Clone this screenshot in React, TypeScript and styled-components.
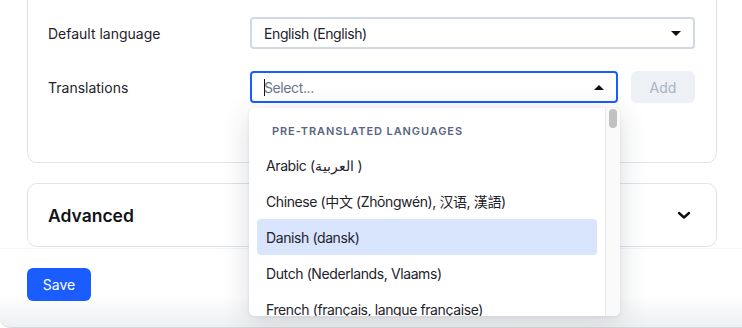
import React from "react";
import styled, { createGlobalStyle } from "styled-components";

const GlobalStyle = createGlobalStyle`
  html, body {
    margin: 0;
    padding: 0;
    background: #ffffff;
    font-family: Inter, "Noto Sans", "Noto Sans CJK SC", sans-serif;
    color: #1e222b;
  }
  * { box-sizing: border-box; }
`;

const languages = [
  "Arabic (العربية )",
  "Chinese (中文 (Zhōngwén), 汉语, 漢語)",
  "Danish (dansk)",
  "Dutch (Nederlands, Vlaams)",
  "French (français, langue française)",
  "German (Deutsch)",
];

export default function App() {
  return (
    <>
      <GlobalStyle />
      <StPanel>
        <StMain>
          <StCard>
            <StRow>
              <StLabel>Default language</StLabel>
              <StSelect>
                <StValue>English (English)</StValue>
                <StCaret dir="down" />
              </StSelect>
            </StRow>
            <StRow>
              <StLabel>Translations</StLabel>
              <StControls>
                <StField>
                  <StSelect focused>
                    <StValue placeholder>
                      <StTextCaret />
                      Select...
                    </StValue>
                    <StCaret dir="up" />
                  </StSelect>
                  <StMenu>
                    <StMenuList>
                      <StGroupTitle>Pre-translated languages</StGroupTitle>
                      {languages.map((lang) => (
                        <StOption key={lang} active={lang === "Danish (dansk)"}>
                          {lang}
                        </StOption>
                      ))}
                    </StMenuList>
                    <StScrollTrack>
                      <StScrollThumb />
                    </StScrollTrack>
                  </StMenu>
                </StField>
                <StAddButton disabled>Add</StAddButton>
              </StControls>
            </StRow>
          </StCard>
          <StSection>
            <StSectionTitle>Advanced</StSectionTitle>
            <svg width="16" height="16" viewBox="0 0 16 16">
              <path
                d="M3 6l5 4.5L13 6"
                fill="none"
                stroke="#111"
                strokeWidth="2.4"
                strokeLinecap="round"
                strokeLinejoin="round"
              />
            </svg>
          </StSection>
        </StMain>
        <StFooter>
          <StSaveButton>Save</StSaveButton>
        </StFooter>
      </StPanel>
    </>
  );
}

const StPanel = styled.div`
  width: 742px;
  height: 328px;
  overflow: hidden;
  display: flex;
  flex-direction: column;
`;

const StMain = styled.div`
  padding: 0 25px 1px 27px;
`;

const StCard = styled.div`
  margin-top: -12px;
  border: 1px solid #dfe3ea;
  border-radius: 10px;
  padding: 28px 21px 59px 20px;
  display: flex;
  flex-direction: column;
  gap: 22px;
`;

const StRow = styled.div`
  display: grid;
  grid-template-columns: 202px 1fr;
  align-items: center;
`;

const StLabel = styled.div`
  font-size: 14px;
  color: #1e222b;
`;

const StControls = styled.div`
  display: flex;
  gap: 13px;
`;

const StField = styled.div`
  position: relative;
  flex: 1;
`;

const StSelect = styled.div<{ focused?: boolean }>`
  height: 32px;
  display: flex;
  align-items: center;
  justify-content: space-between;
  padding: 0 12px 0 12px;
  border: 2px solid ${(p) => (p.focused ? "#1b5cff" : "#d3d9e3")};
  border-radius: 4px;
  background: #fff;
`;

const StValue = styled.div<{ placeholder?: boolean }>`
  font-size: 14px;
  letter-spacing: -0.4px;
  color: ${(p) => (p.placeholder ? "#6c768a" : "#1e222b")};
  display: flex;
  align-items: center;
`;

const StTextCaret = styled.span`
  display: inline-block;
  width: 1px;
  height: 17px;
  background: #111;
  margin-right: -1px;
`;

const StCaret = styled.span<{ dir: "up" | "down" }>`
  width: 0;
  height: 0;
  border-left: 5px solid transparent;
  border-right: 5px solid transparent;
  ${(p) =>
    p.dir === "down"
      ? "border-top: 5px solid #111;"
      : "border-bottom: 5px solid #111;"}
`;

const StAddButton = styled.button`
  width: 64px;
  height: 32px;
  border: none;
  border-radius: 6px;
  background: #edf0f5;
  color: #a9b3c4;
  font-family: inherit;
  font-size: 14px;
`;

const StMenu = styled.div`
  position: absolute;
  top: 37px;
  left: -1px;
  width: 371px;
  height: 208px;
  background: #fff;
  border-radius: 6px;
  box-shadow: 0 6px 28px rgba(25, 35, 55, 0.16), 0 1px 4px rgba(25, 35, 55, 0.06);
  display: flex;
  overflow: hidden;
  z-index: 10;
`;

const StMenuList = styled.div`
  flex: 1;
  padding: 0 8px;
`;

const StGroupTitle = styled.div`
  padding: 16px 15px 8px;
  font-size: 11px;
  line-height: 15px;
  font-weight: 600;
  letter-spacing: 0.9px;
  text-transform: uppercase;
  color: #5a6582;
`;

const StOption = styled.div<{ active?: boolean }>`
  height: 36px;
  display: flex;
  align-items: center;
  padding-left: 9px;
  border-radius: 4px;
  font-size: 14px;
  letter-spacing: -0.4px;
  color: #1e222b;
  white-space: nowrap;
  background: ${(p) => (p.active ? "#d9e5fd" : "transparent")};
`;

const StScrollTrack = styled.div`
  width: 15px;
  border-left: 1px solid #e9e9e9;
  background: #fafafa;
  padding: 1px 3px 0 3px;
`;

const StScrollThumb = styled.div`
  width: 8px;
  height: 19px;
  border-radius: 4px;
  background: #c1c1c1;
`;

const StSection = styled.div`
  margin-top: 20px;
  height: 64px;
  border: 1px solid #dfe3ea;
  border-radius: 10px;
  padding: 0 24px 0 20px;
  display: flex;
  align-items: center;
  justify-content: space-between;
`;

const StSectionTitle = styled.div`
  font-size: 17.5px;
  font-weight: 600;
  color: #111318;
`;

const StFooter = styled.div`
  flex: 1;
  border-top: 1px solid #f3f4f6;
  border-bottom: 1px solid #d6d9de;
  border-bottom-left-radius: 10px;
  padding: 19px 27px 0;
  background: linear-gradient(to bottom, #ffffff 60%, #eeeff1 100%);
`;

const StSaveButton = styled.button`
  width: 64px;
  height: 33px;
  border: none;
  border-radius: 6px;
  background: #1b5cff;
  color: #fff;
  font-family: inherit;
  font-size: 14px;
`;
